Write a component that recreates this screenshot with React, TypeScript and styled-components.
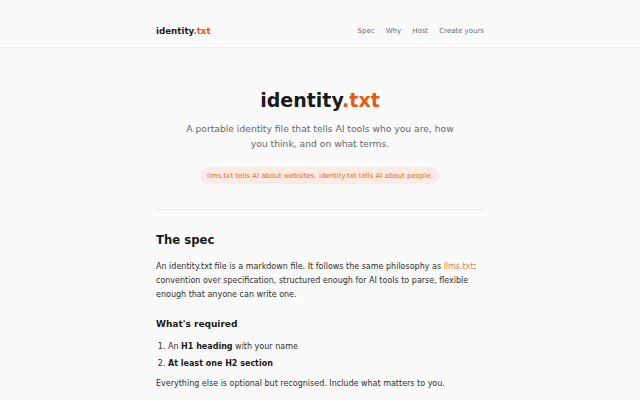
import React from "react";
import styled, { createGlobalStyle } from "styled-components";

const Global = createGlobalStyle`
  html, body { margin: 0; padding: 0; background: #fafafa; }
  body { font-family: "DejaVu Sans", "Liberation Sans", sans-serif; color: #1c1c1c; }
  * { box-sizing: border-box; }
`;

const Header = styled.header`
  border-bottom: 1px solid #ebebeb;
  padding: 25px 0 10px;
`;

const Inner = styled.div`
  width: 328px;
  margin: 0 auto;
`;

const HeaderInner = styled(Inner)`
  display: flex;
  align-items: center;
  justify-content: space-between;
  height: 12px;
`;

const Logo = styled.div`
  font-size: 8.7px;
  font-weight: 700;
  color: #1a1a1a;
`;

const Accent = styled.span`
  color: #e8590c;
`;

const Nav = styled.nav`
  display: flex;
  gap: 11px;
`;

const NavLink = styled.a`
  font-size: 7px;
  color: #6b6b6b;
  text-decoration: none;
`;

const Hero = styled.section`
  display: flex;
  flex-direction: column;
  align-items: center;
  text-align: center;
  padding-top: 41px;
`;

const Title = styled.h1`
  margin: 0;
  font-size: 19px;
  line-height: 22px;
  font-weight: 700;
  color: #1a1a1a;
`;

const Subtitle = styled.p`
  margin: 9.5px 0 0;
  max-width: 280px;
  font-size: 9.2px;
  line-height: 15px;
  color: #666;
`;

const Pill = styled.div`
  margin-top: 16.5px;
  height: 17px;
  display: flex;
  align-items: center;
  padding: 0 7px;
  border-radius: 9px;
  background: #fcebe2;
  color: #ec6a2c;
  font-size: 7px;
`;

const Divider = styled.hr`
  width: 328px;
  margin: 25px auto 0;
  border: 0;
  border-top: 1px solid #e8e8e8;
`;

const Section = styled(Inner)`
  padding-top: 22.5px;
`;

const H2 = styled.h2`
  margin: 0;
  font-size: 11.7px;
  line-height: 15px;
  font-weight: 700;
  color: #1a1a1a;
`;

const Para = styled.p<{ $mt: number }>`
  margin: ${(p) => p.$mt}px 0 0;
  font-size: 8px;
  line-height: 14px;
  color: #2e2e2e;
`;

const Lines = styled(Para)`
  white-space: nowrap;
`;

const Link = styled.a`
  color: #ef7d3c;
  text-decoration: none;
`;

const H3 = styled.h3`
  margin: 16px 0 0;
  font-size: 9px;
  line-height: 12px;
  font-weight: 700;
  color: #1a1a1a;
`;

const List = styled.ol`
  margin: 9.5px 0 0;
  padding-left: 12px;
  display: flex;
  flex-direction: column;
  gap: 3px;
`;

const Item = styled.li`
  font-size: 8px;
  line-height: 14px;
  color: #2e2e2e;
  b { color: #1a1a1a; font-weight: 700; }
`;

export default function App() {
  return (
    <>
      <Global />
      <Header>
        <HeaderInner>
          <Logo>
            identity<Accent>.txt</Accent>
          </Logo>
          <Nav>
            <NavLink href="#spec">Spec</NavLink>
            <NavLink href="#why">Why</NavLink>
            <NavLink href="#host">Host</NavLink>
            <NavLink href="#create">Create yours</NavLink>
          </Nav>
        </HeaderInner>
      </Header>
      <Hero>
        <Title>
          identity<Accent>.txt</Accent>
        </Title>
        <Subtitle>
          A portable identity file that tells AI tools who you are, how you think, and on what terms.
        </Subtitle>
        <Pill>llms.txt tells AI about websites. identity.txt tells AI about people.</Pill>
      </Hero>
      <Divider />
      <Section>
        <H2>The spec</H2>
        <Lines $mt={12.5}>
          An identity.txt file is a markdown file. It follows the same philosophy as <Link href="#">llms.txt</Link>:
          <br />
          convention over specification, structured enough for AI tools to parse, flexible
          <br />
          enough that anyone can write one.
        </Lines>
        <H3>What's required</H3>
        <List>
          <Item>
            An <b>H1 heading</b> with your name
          </Item>
          <Item>
            <b>At least one H2 section</b>
          </Item>
        </List>
        <Para $mt={6}>Everything else is optional but recognised. Include what matters to you.</Para>
      </Section>
    </>
  );
}
